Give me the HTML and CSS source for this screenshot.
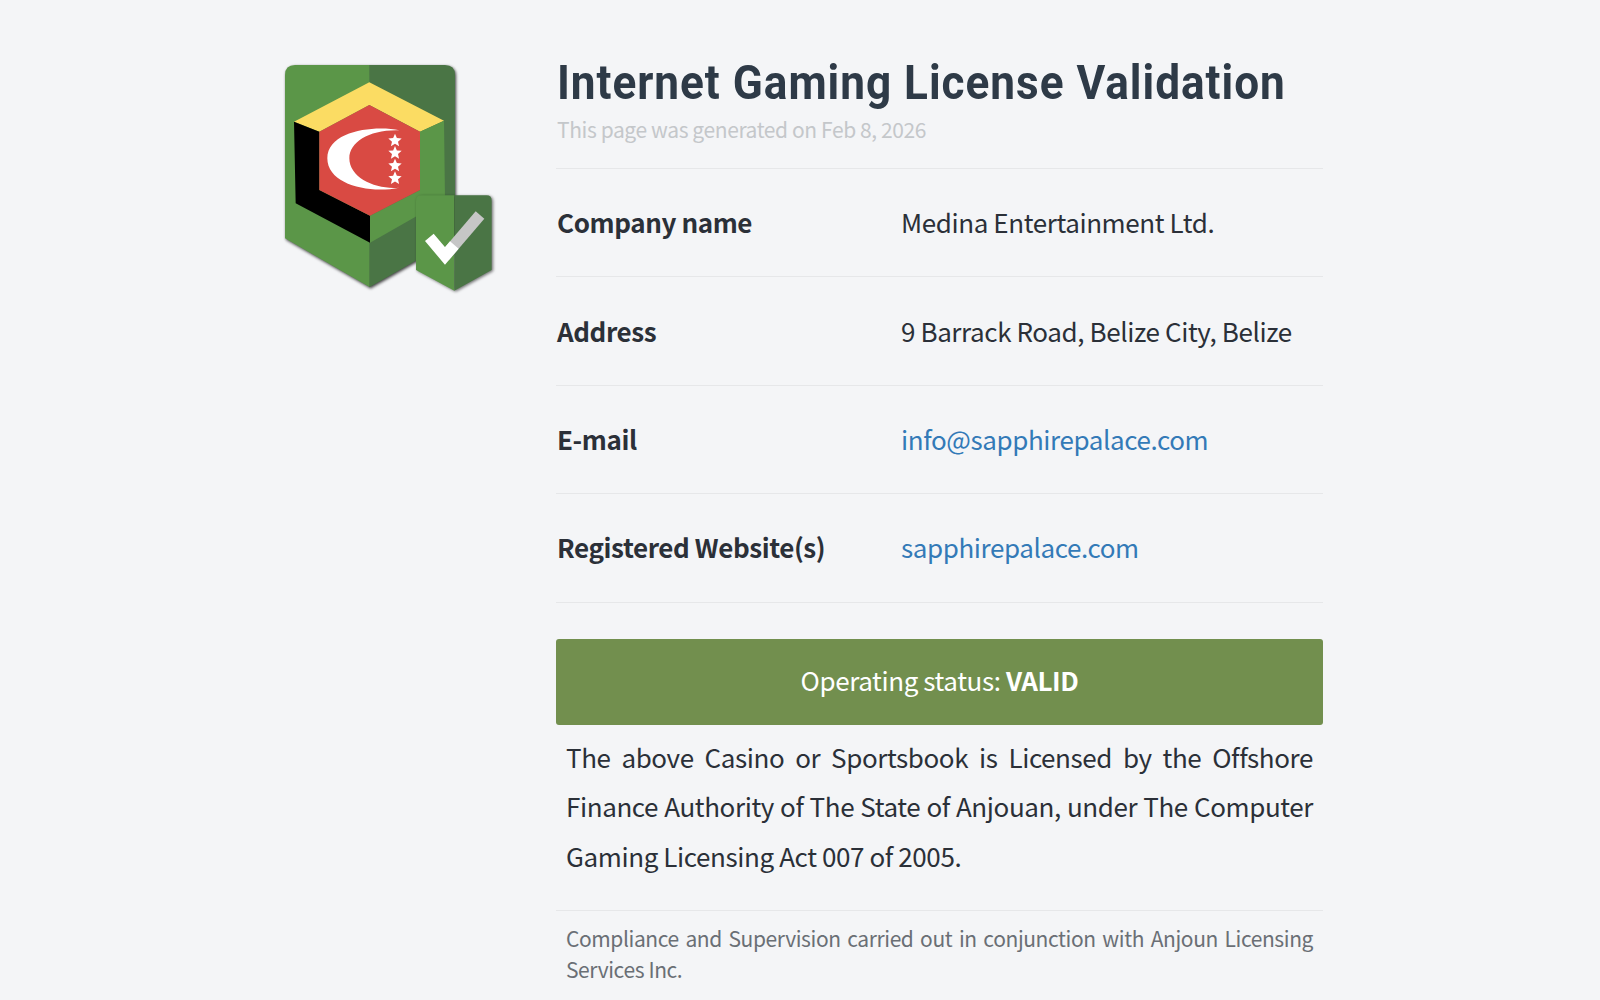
FILE: index.html
```html
<!DOCTYPE html>
<html lang="en">
<head>
  <meta charset="UTF-8" />
  <meta name="viewport" content="width=device-width, initial-scale=1.0"/>
  <title>Internet Gaming License Validation</title>
  <link rel="stylesheet" href="styles.css">
</head>
<body>
  <div class="container">
    <!-- Seal -->
    <div class="seal-col">
      <svg class="seal" viewBox="0 0 720 750" width="240" height="250" role="img" aria-label="Validated seal">
        <defs>
          <path id="star" d="M375 251L380.6 264.2L395 265.5L384 274.9L387.3 289L375 281.5L362.7 289L366 274.9L355 265.5L369.4 264.2Z"/>
        </defs>
        <g class="seal-shield">
          <path class="g-light" d="M75 45H300V712L45 565V75Q45 45 75 45Z"/>
          <path class="g-dark" d="M298 45H525Q555 45 555 75V565L298 712Z"/>
        </g>
        <path class="yellow" d="M298 97L522 212L450 245L298 165L148 245L72 215Z"/>
        <path class="black" d="M72 215L148 245V420L300 497V578L77 460Z"/>
        <path class="g-light" d="M522 212L450 245V420L300 497V578L525 450Z"/>
        <path class="red" d="M298 165L450 245V420L300 497L148 420V245Z"/>
        <path class="white" d="M388 241C320 225 172 240 172 325C172 405 300 432 388 413C320 420 238 385 238 325C238 275 300 238 388 241Z"/>
        <g class="white">
          <use href="#star"/>
          <use href="#star" y="37"/>
          <use href="#star" y="75"/>
          <use href="#star" y="113"/>
        </g>
        <g class="seal-badge">
          <path class="g-light" d="M455 436H553V722L438 660V452Q438 436 455 436Z"/>
          <path class="g-dark" d="M553 436H650Q665 436 665 452V660L553 722Z"/>
        </g>
        <path class="tick-grey" d="M525 618L630 495" />
        <path class="tick-white" d="M478 562L525 618L553 585" />
      </svg>
    </div>

    <!-- License details -->
    <div class="main-col">
      <h1>Internet Gaming License Validation</h1>
      <p class="generated">This page was generated on Feb 8, 2026</p>

      <div class="details">
        <div class="row">
          <div class="row-label">Company name</div>
          <div>Medina Entertainment Ltd.</div>
        </div>
        <div class="row">
          <div class="row-label">Address</div>
          <div>9 Barrack Road, Belize City, Belize</div>
        </div>
        <div class="row">
          <div class="row-label">E-mail</div>
          <div><a href="#">info@sapphirepalace.com</a></div>
        </div>
        <div class="row">
          <div class="row-label">Registered Website(s)</div>
          <div><a href="#">sapphirepalace.com</a></div>
        </div>
      </div>

      <div class="status">Operating status: <strong>VALID</strong></div>

      <p class="about">The above Casino or Sportsbook is Licensed by the Offshore Finance Authority of The State of Anjouan, under The Computer Gaming Licensing Act 007 of 2005.</p>

      <p class="compliance">Compliance and Supervision carried out in conjunction with Anjoun Licensing Services Inc.</p>
    </div>
  </div>
</body>
</html>
```
FILE: styles.css
```css
html, body { margin: 0; height: 1000px; overflow: hidden; }
body { background: #f4f5f7; color: #2b3038; font-family: "Noto Sans CJK SC", "Source Sans Pro", sans-serif; font-size: 26px; letter-spacing: -.4px; }
a { color: #337ab7; text-decoration: none; }

.container { width: 1060px; margin: 0 auto; display: flex; }
.seal-col { width: 286px; padding-top: 50px; flex: none; }
.seal { display: block; }
.main-col { width: 767px; padding-top: 50px; }

h1 { margin: 0; padding-left: 1px; font-family: Roboto, sans-serif; font-weight: 700; font-size: 49px; line-height: 66px; letter-spacing: 1.1px; color: #2e3a47; white-space: nowrap; transform: scaleX(.9); transform-origin: left center; }
.generated { margin: -1px 0 0; padding: 0 0 25px 1px; font-size: 21px; line-height: 28px; color: #c4c7ca; }

.details { border-bottom: 1px solid #e6e7e9; }
.row { display: grid; grid-template-columns: 344px 1fr; align-items: center; box-sizing: border-box; height: 108.4px; padding: 0 0 2px 1px; border-top: 1px solid #e6e7e9; }
.row-label { font-weight: 700; }

.status { margin-top: 36px; height: 86px; line-height: 82px; text-align: center; background: #728f4e; color: #fff; border-radius: 3px; }
.status strong { font-weight: 700; }

.about { margin: 0; padding: 7px 10px 30px; line-height: 49.5px; text-align: justify; border-bottom: 1px solid #e6e7e9; }
.compliance { margin: 0; padding: 12px 10px 0; font-size: 21px; line-height: 31px; letter-spacing: -.4px; text-align: justify; color: #6a6f75; }

/* seal colours */
.g-light { fill: #5b9648; }
.g-dark { fill: #4a7545; }
.yellow { fill: #fbdc63; }
.black { fill: #000; }
.red { fill: #d94a43; }
.white { fill: #fff; }
.seal-shield { filter: drop-shadow(3px 4px 4px rgba(0, 0, 0, .75)); }
.seal-badge { filter: drop-shadow(4px 3px 4px rgba(0, 0, 0, .55)); }
.tick-grey, .tick-white { fill: none; stroke-width: 34; }
.tick-grey { stroke: #c6c6c6; }
.tick-white { stroke: #fff; }
```
